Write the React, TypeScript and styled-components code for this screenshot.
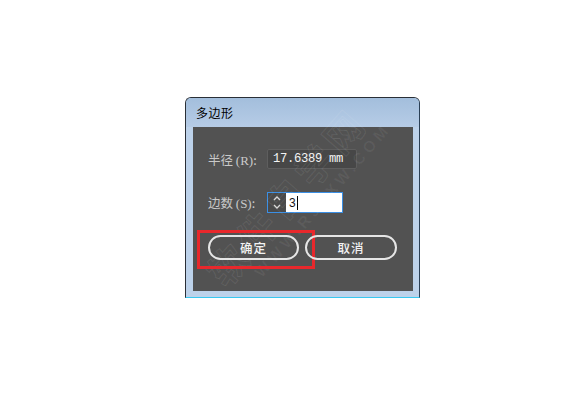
import React from "react";
import styled, { createGlobalStyle } from "styled-components";

const Global = createGlobalStyle`
  html, body { margin: 0; padding: 0; background: #ffffff; }
  body { font-family: "Noto Sans CJK SC", "Noto Sans", sans-serif; }
`;

const Page = styled.div`
  width: 584px;
  height: 405px;
  box-sizing: border-box;
  padding: 97px 0 0 185px;
`;

const Window = styled.div`
  position: relative;
  width: 235px;
  box-sizing: border-box;
  border: 1px solid #2a2f36;
  border-bottom: 1px solid #38c8f0;
  border-right-color: #2a3f55;
  border-radius: 6px 6px 0 0;
  background: #bdd2ea;
  overflow: hidden;
`;

const TitleBar = styled.div`
  height: 29px;
  display: flex;
  align-items: center;
  padding-left: 10px;
  background: linear-gradient(#a3bedc, #b6cce6);
  font-size: 12px;
  color: #000;
  letter-spacing: 0.5px;
`;

const Frame = styled.div`
  padding: 0 6px 6px 7px;
`;

const Content = styled.div`
  position: relative;
  height: 164px;
  box-sizing: border-box;
  background: #525252;
  padding: 22px 0 0 15px;
  display: flex;
  flex-direction: column;
`;

const Row = styled.div<{ $mt?: number }>`
  display: flex;
  align-items: center;
  margin-top: ${(p) => p.$mt ?? 0}px;
`;

const Label = styled.div`
  width: 59px;
  font-size: 12.5px;
  color: #c9c9c9;
  white-space: nowrap;
  font-family: "Noto Sans CJK SC", sans-serif;
`;

const Ascii = styled.span`
  font-family: "Liberation Serif", serif;
  font-size: 13px;
`;

const ValueBox = styled.div`
  width: 90px;
  height: 20px;
  box-sizing: border-box;
  background: #474747;
  border: 1px solid #5e5e5e;
  border-radius: 2px;
  display: flex;
  align-items: center;
  padding-left: 5px;
  font-family: "Liberation Mono", monospace;
  font-size: 12.2px;
  letter-spacing: -0.3px;
  color: #f4f4f4;
`;

const Spinner = styled.div`
  width: 76px;
  height: 21px;
  box-sizing: border-box;
  border: 1px solid #3b8fe4;
  display: flex;
`;

const Arrows = styled.div`
  width: 18px;
  background: #4a4a4a;
  display: flex;
  align-items: center;
  justify-content: center;
`;

const Field = styled.div`
  flex: 1;
  background: #ffffff;
  display: flex;
  align-items: center;
  padding-left: 3px;
  font-family: "Liberation Sans", sans-serif;
  font-size: 12px;
  color: #111;
`;

const Caret = styled.span`
  display: inline-block;
  width: 1px;
  height: 14px;
  background: #000;
  margin-left: 1px;
`;

const Buttons = styled.div`
  display: flex;
  gap: 6px;
  margin-top: 22px;
`;

const Button = styled.div<{ $w: number }>`
  position: relative;
  width: ${(p) => p.$w}px;
  height: 25px;
  box-sizing: border-box;
  border: 2px solid #e6e6e6;
  border-radius: 13px;
  display: flex;
  align-items: center;
  justify-content: center;
  color: #f2f2f2;
  font-size: 12.5px;
  font-weight: 500;
  letter-spacing: 1px;
`;

const Highlight = styled.div`
  position: absolute;
  left: -13px;
  top: -7px;
  width: 118px;
  height: 39px;
  box-sizing: border-box;
  border: 3px solid #e8282c;
  pointer-events: none;
`;

const Watermark = styled.div`
  position: absolute;
  left: 46%;
  top: 46%;
  transform: translate(-50%, -50%) rotate(-49deg);
  pointer-events: none;
  display: flex;
  flex-direction: column;
  align-items: center;
  white-space: nowrap;
`;

const WmBig = styled.div`
  font-size: 38px;
  line-height: 42px;
  font-weight: 700;
  color: transparent;
  -webkit-text-stroke: 1px rgba(255, 255, 255, 0.09);
  letter-spacing: 6px;
`;

const WmSmall = styled.div`
  font-family: "Liberation Sans", sans-serif;
  font-size: 16px;
  line-height: 20px;
  font-weight: 700;
  color: rgba(255, 255, 255, 0.06);
  letter-spacing: 4px;
  margin-left: 40px;
`;

export default function App() {
  return (
    <>
      <Global />
      <Page>
        <Window>
          <TitleBar>多边形</TitleBar>
          <Frame>
            <Content>
              <Watermark>
                <WmBig>软件自学网</WmBig>
                <WmSmall>WWW.RJZXW.COM</WmSmall>
              </Watermark>
              <Row>
                <Label>
                  半径 <Ascii>(R)</Ascii>:
                </Label>
                <ValueBox>17.6389 mm</ValueBox>
              </Row>
              <Row $mt={23}>
                <Label>
                  边数 <Ascii>(S)</Ascii>:
                </Label>
                <Spinner>
                  <Arrows>
                    <svg width="10" height="17" viewBox="0 0 10 17" fill="none">
                      <path d="M2 6 L5 3 L8 6" stroke="#d8d8d8" strokeWidth="1.3" />
                      <path d="M2 11 L5 14 L8 11" stroke="#d8d8d8" strokeWidth="1.3" />
                    </svg>
                  </Arrows>
                  <Field>
                    3<Caret />
                  </Field>
                </Spinner>
              </Row>
              <Buttons>
                <Button $w={91}>
                  确定
                  <Highlight />
                </Button>
                <Button $w={92}>取消</Button>
              </Buttons>
            </Content>
          </Frame>
        </Window>
      </Page>
    </>
  );
}
